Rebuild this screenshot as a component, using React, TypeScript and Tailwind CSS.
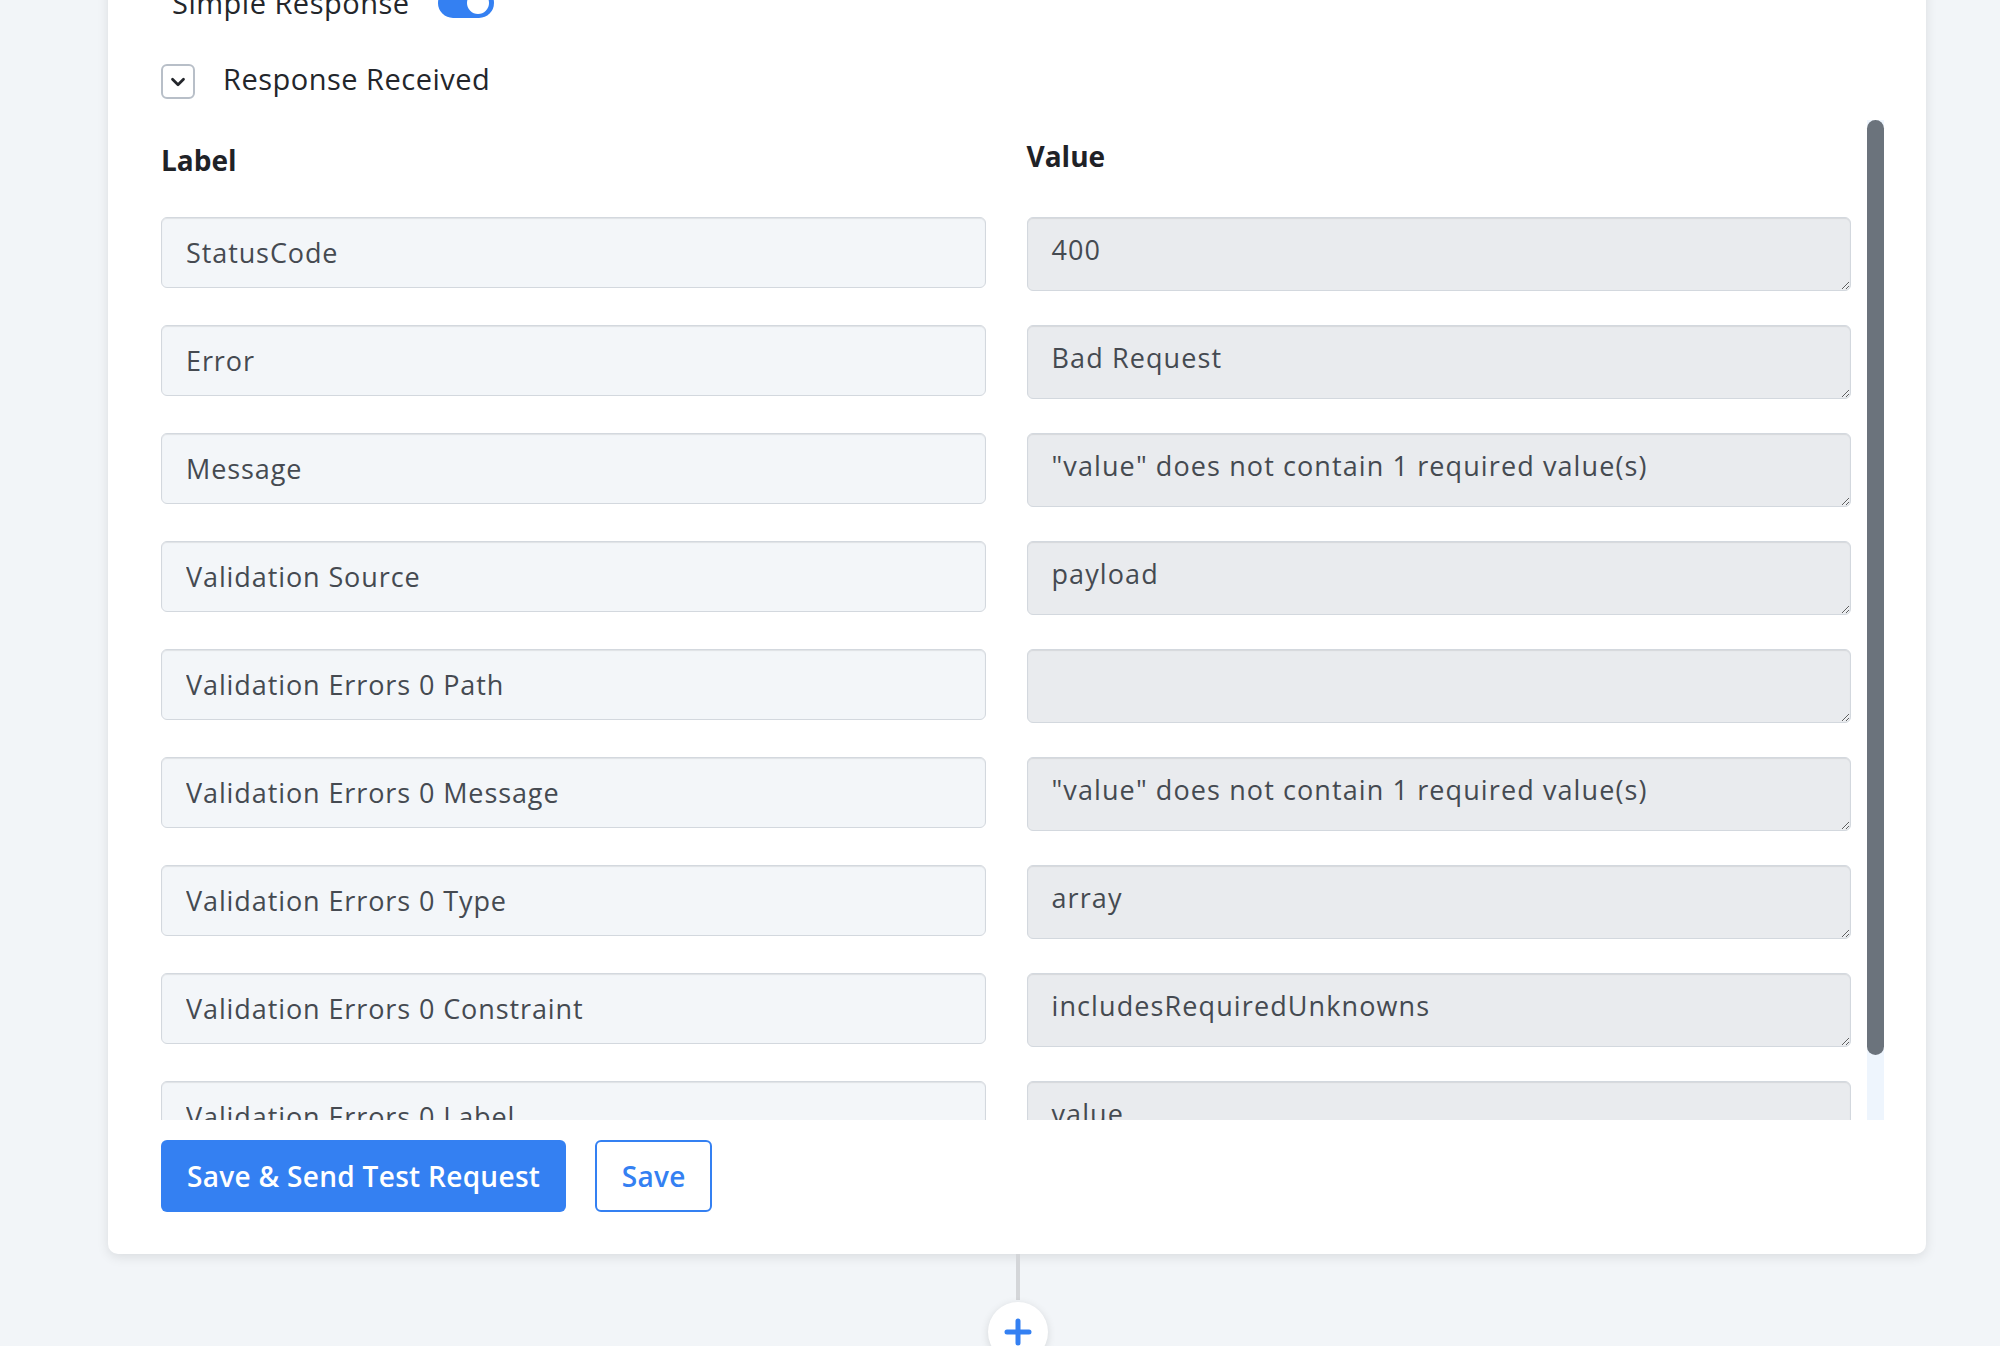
import { ChevronDown } from 'lucide-react'

type Field = { label: string; value: string }

const fields: Field[] = [
  { label: 'StatusCode', value: '400' },
  { label: 'Error', value: 'Bad Request' },
  { label: 'Message', value: '"value" does not contain 1 required value(s)' },
  { label: 'Validation Source', value: 'payload' },
  { label: 'Validation Errors 0 Path', value: '' },
  { label: 'Validation Errors 0 Message', value: '"value" does not contain 1 required value(s)' },
  { label: 'Validation Errors 0 Type', value: 'array' },
  { label: 'Validation Errors 0 Constraint', value: 'includesRequiredUnknowns' },
  { label: 'Validation Errors 0 Label', value: 'value' },
]

const font = "font-['Open_Sans','Liberation_Sans',sans-serif]"

function FieldRow({ label, value }: Field) {
  return (
    <div className="grid grid-cols-2 gap-x-[41px] h-[108px] items-start">
      <input
        readOnly
        value={label}
        className={`${font} h-[71px] w-full rounded-[6px] border border-[#d3d8de] bg-[#f3f6f9] px-6 text-[27px] tracking-[0.9px] text-[#454a51] shadow-[inset_0_1px_1px_rgba(0,0,0,0.08)] outline-none`}
      />
      <textarea
        readOnly
        value={value}
        rows={1}
        className={`${font} h-[74px] w-full resize-y rounded-[6px] border border-[#d3d8de] bg-[#e9ebee] px-6 pt-[15px] text-[27px] leading-[34px] tracking-[1.1px] text-[#454a51] shadow-[inset_0_1px_1px_rgba(0,0,0,0.08)] outline-none`}
      />
    </div>
  )
}

export default function App() {
  return (
    <div className={`${font} h-[1346px] overflow-hidden bg-[#f2f5f8]`}>
      <div className="ml-[108px] -mt-[60px] w-[1818px] rounded-[10px] bg-white pt-[48px] pb-[42px] pl-[53px] pr-[42px] shadow-[0_3px_12px_rgba(0,0,0,0.1)]">
        {/* Simple Response toggle */}
        <div className="flex h-[30px] items-center pl-[11px]">
          <span className="text-[29px] tracking-[0.5px] text-[#23262b]">Simple Response</span>
          <div className="ml-[28px] flex h-[30px] w-[56px] items-center justify-end rounded-full bg-[#3480f2] pr-[5px]">
            <div className="h-[22px] w-[22px] rounded-full bg-white" />
          </div>
        </div>

        {/* Response Received header */}
        <div className="mt-[46px] flex h-[35px] items-center">
          <div className="flex h-[35px] w-[34px] items-center justify-center rounded-[6px] border-2 border-[#b8bfc8]">
            <ChevronDown size={22} strokeWidth={3} className="text-[#23262b]" />
          </div>
          <span className="ml-[28px] -mt-[6px] text-[29px] tracking-[0.5px] text-[#23262b]">Response Received</span>
        </div>

        {/* Scrollable label/value list */}
        <div className="mt-[21px] flex h-[1000px] gap-[16px]">
          <div className="flex-1 overflow-hidden">
            <div className="grid grid-cols-2 gap-x-[41px] h-[80px] items-center mb-[17px]">
              <span className="text-[28px] font-bold text-[#1f2227]">Label</span>
              <span className="mb-2 text-[28px] font-bold text-[#1f2227]">Value</span>
            </div>
            {fields.map((f) => (
              <FieldRow key={f.label} {...f} />
            ))}
          </div>
          <div className="flex w-[17px] flex-col bg-[#eef5fd]">
            <div className="h-[935px] w-full rounded-full bg-[#6b737c]" />
          </div>
        </div>

        {/* Actions */}
        <div className="mt-[20px] flex items-center gap-[29px]">
          <button className="h-[72px] rounded-[6px] bg-[#3480f2] px-[26px] text-[28px] font-semibold tracking-[0.3px] text-white">
            Save &amp; Send Test Request
          </button>
          <button className="h-[72px] w-[117px] rounded-[6px] border-2 border-[#3480f2] bg-white text-[28px] font-semibold tracking-[0.3px] text-[#3480f2]">
            Save
          </button>
        </div>
      </div>

      {/* Add-step connector */}
      <div className="ml-[988px] flex w-[60px] flex-col items-center">
        <div className="h-[46px] w-[4px] bg-[#d4d6d9]" />
        <div className="mt-[2px] flex h-[60px] w-[60px] items-center justify-center rounded-full bg-white shadow-[0_2px_8px_rgba(0,0,0,0.12)]">
          <svg width="28" height="28" viewBox="0 0 28 28" fill="none" stroke="#3480f2" strokeWidth="5" strokeLinecap="round">
            <path d="M14 3v22M3 14h22" />
          </svg>
        </div>
      </div>
    </div>
  )
}
